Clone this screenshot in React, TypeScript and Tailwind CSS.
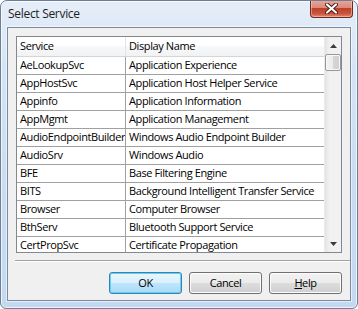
import React from 'react'

const services: [string, string][] = [
  ['AeLookupSvc', 'Application Experience'],
  ['AppHostSvc', 'Application Host Helper Service'],
  ['Appinfo', 'Application Information'],
  ['AppMgmt', 'Application Management'],
  ['AudioEndpointBuilder', 'Windows Audio Endpoint Builder'],
  ['AudioSrv', 'Windows Audio'],
  ['BFE', 'Base Filtering Engine'],
  ['BITS', 'Background Intelligent Transfer Service'],
  ['Browser', 'Computer Browser'],
  ['BthServ', 'Bluetooth Support Service'],
  ['CertPropSvc', 'Certificate Propagation'],
]

function Arrow({ down }: { down?: boolean }) {
  return (
    <div className="h-[17px] w-full flex items-center justify-center">
      <svg width="7" height="4" viewBox="0 0 7 4">
        {down ? (
          <path d="M0 0 H7 L3.5 4 Z" fill="#3c3c3c" />
        ) : (
          <path d="M0 4 H7 L3.5 0 Z" fill="#3c3c3c" />
        )}
      </svg>
    </div>
  )
}

function Button({ children, primary }: { children: React.ReactNode; primary?: boolean }) {
  return (
    <div
      className={
        'w-[73px] h-[22px] rounded-[3px] border flex items-center justify-center text-black ' +
        (primary
          ? 'border-[#3c7fb1] shadow-[inset_0_0_0_1px_#5cd2f5] bg-[linear-gradient(#eaf6fd_0%,#d9f0fc_50%,#bee6fd_50%,#a7d9f5_100%)]'
          : 'border-[#707070] shadow-[inset_0_0_0_1px_#fcfcfc] bg-[linear-gradient(#f2f2f2_0%,#ebebeb_50%,#dddddd_50%,#cfcfcf_100%)]')
      }
    >
      {children}
    </div>
  )
}

export default function App() {
  return (
    <div className="w-[358px] h-[309px] bg-white font-['Open_Sans',sans-serif] text-[11px] tracking-[-0.4px] text-black">
      <div className="w-[358px] h-[309px] flex flex-col rounded-t-[7px] rounded-b-[6px] border border-[#6d7f97] bg-[linear-gradient(#e6eef8_0%,#d6e5f5_20%,#c9dcf1_60%,#c4d9f0_100%)] shadow-[inset_0_0_0_1px_rgba(255,255,255,0.7)] overflow-hidden">
        {/* Title bar */}
        <div className="h-[26px] flex items-start shrink-0">
          <span className="ml-[7px] mt-[5px] text-[12px] leading-[16px] tracking-[-0.3px] text-[#1e1e1e]">Select Service</span>
          <div className="ml-auto mr-[4px] -mt-px w-[43px] h-[18px] rounded-b-[4px] border border-[#6b2a22] border-t-0 bg-[linear-gradient(#e9a99c_0%,#d98a7c_45%,#c0402c_50%,#c9553f_80%,#e08a6c_100%)] shadow-[inset_0_0_0_1px_rgba(255,220,210,0.45)] flex items-center justify-center">
            <svg width="13" height="11" viewBox="0 0 13 11">
              <path d="M2 1.5 L11 9.5 M11 1.5 L2 9.5" stroke="#4a1a14" strokeWidth="4" strokeLinecap="round" />
              <path d="M2 1.5 L11 9.5 M11 1.5 L2 9.5" stroke="#ffffff" strokeWidth="2.2" strokeLinecap="round" />
            </svg>
          </div>
        </div>

        {/* Frame body */}
        <div className="flex-1 px-[6px] pb-[7px] flex flex-col">
          <div className="flex-1 border border-[#7a8a9f] bg-[#f0f0f0] flex flex-col shadow-[0_0_0_1px_rgba(255,255,255,0.55)]">
            {/* List view */}
            <div className="mt-[8px] ml-[8px] w-[326px] h-[217px] border border-[#828790] bg-white flex overflow-hidden">
              <div className="flex-1 min-w-0 overflow-hidden">
                <div className="h-[20px] flex border-b border-[#d5d5d5] bg-[linear-gradient(#ffffff_0%,#ffffff_50%,#f7f8fa_50%,#f1f2f4_100%)]">
                  <div className="w-[109px] shrink-0 pl-[3px] flex items-center border-r border-[#e3e4e6]">Service</div>
                  <div className="pl-[3px] flex items-center whitespace-nowrap">Display Name</div>
                </div>
                {services.map(([name, display]) => (
                  <div key={name} className="h-[18px] flex border-b border-[#a0a0a0] whitespace-nowrap">
                    <div className="w-[109px] shrink-0 pl-[3px] flex items-center overflow-hidden border-r border-[#a0a0a0]">{name}</div>
                    <div className="pl-[3px] flex items-center">{display}</div>
                  </div>
                ))}
              </div>
              {/* Scrollbar */}
              <div className="w-[17px] shrink-0 flex flex-col bg-[linear-gradient(90deg,#e4e4e4_0%,#f1f1f1_30%,#f1f1f1_100%)] border-l border-[#eaeaea]">
                <Arrow />
                <div className="h-[17px] rounded-[2px] border border-[#979797] bg-[linear-gradient(90deg,#f2f2f2_0%,#ebebeb_50%,#d6d6d6_51%,#cfcfcf_100%)] shadow-[inset_0_0_0_1px_#f8f8f8]" />
                <div className="flex-1" />
                <Arrow down />
              </div>
            </div>

            {/* Separator */}
            <div className="mt-[7px] ml-[7px] h-[2px] border-t border-[#a0a0a0] border-b border-b-white" />

            {/* Buttons */}
            <div className="mt-[10px] flex justify-end gap-[7px] pr-[8px]">
              <Button primary>OK</Button>
              <Button>Cancel</Button>
              <Button>
                <span>
                  <span className="underline">H</span>elp
                </span>
              </Button>
            </div>
          </div>
        </div>
      </div>
    </div>
  )
}
